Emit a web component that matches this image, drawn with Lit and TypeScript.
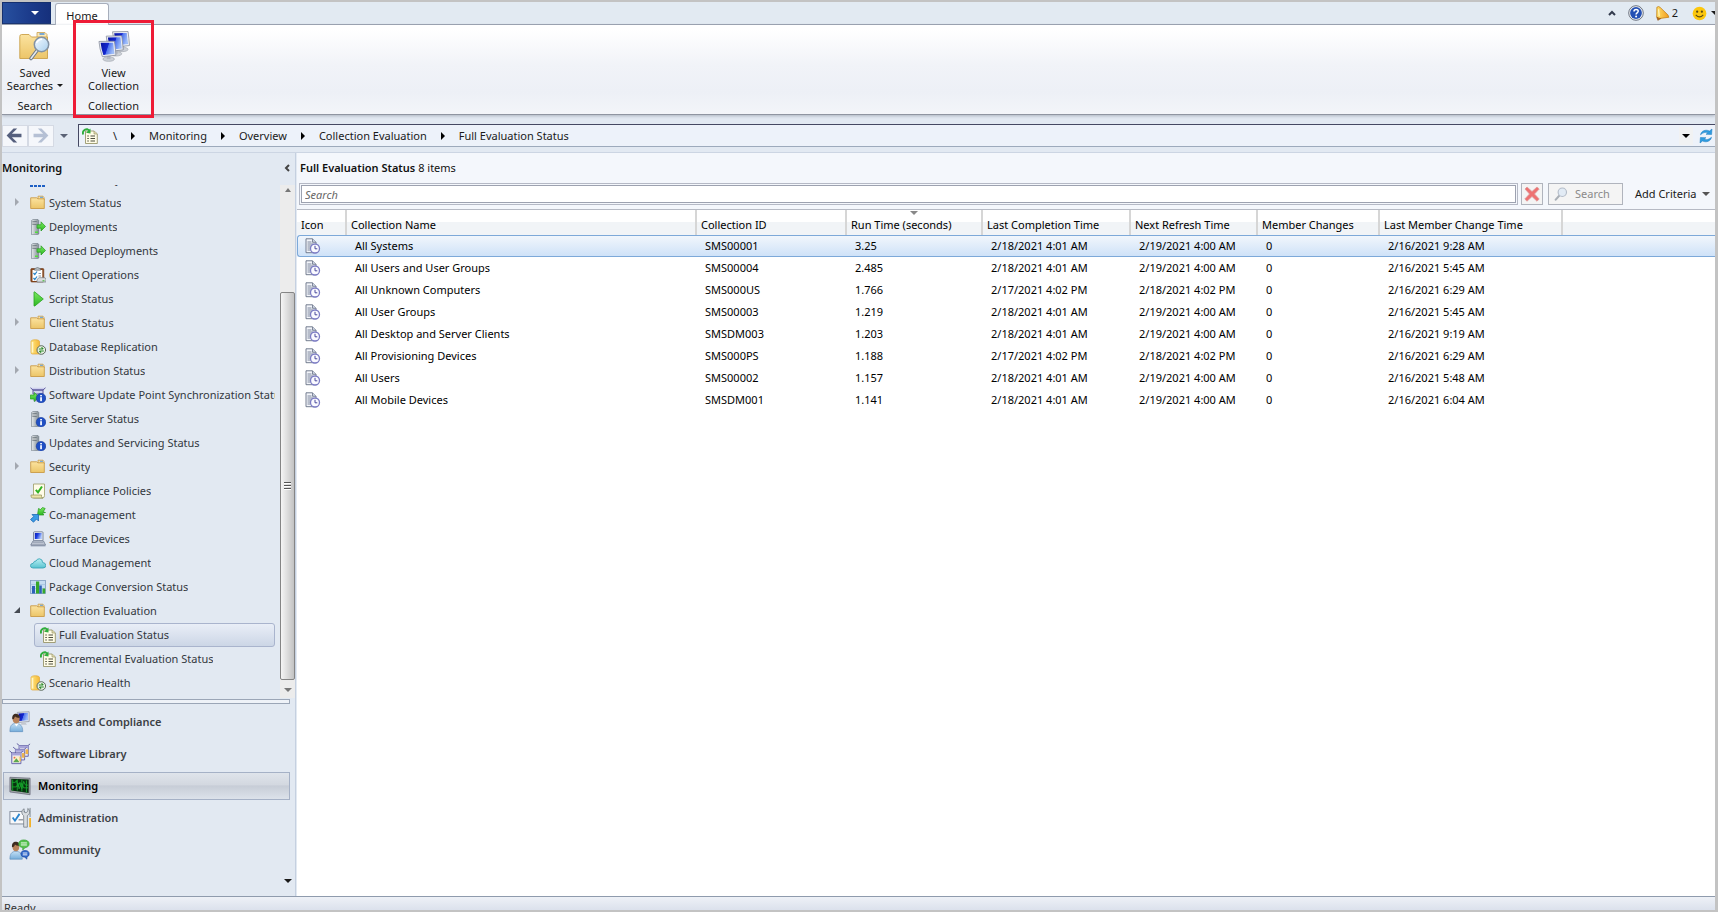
import { LitElement, html, css, svg, nothing } from "lit";
import { customElement, state } from "lit/decorators.js";
import { classMap } from "lit/directives/class-map.js";

type Shape = ReturnType<typeof svg>;

const icon = (size: number, shape: Shape, box = 16) => html`
  <svg class="icon" width=${size} height=${size} viewBox="0 0 ${box} ${box}" aria-hidden="true">${shape}</svg>`;

const info = svg`
  <circle cx="11" cy="11.2" r="4.8" fill="#1f4fc4" stroke="#173a9a" stroke-width=".6"/>
  <rect x="10.2" y="10.2" width="1.7" height="4" fill="#fff"/><rect x="10.2" y="8" width="1.7" height="1.4" fill="#fff"/>`;
const tower = svg`
  <path d="M1.5 1.5 3 .5h5l.8 1V15l-1.2.7H1.5z" fill="url(#steel)" stroke="#6f7b84" stroke-width=".6"/>
  <path d="M2.3 3h4.4M2.3 5h4.4" stroke="#3f4a52" stroke-width="1"/>
  <path d="M2.3 4h4.4" stroke="#fff" stroke-width=".8"/>`;
const database = svg`
  <path d="M1 2.5C1 .2 9.500.2 9.500 2.500V15H2.500Q1 15 1 13.500z" fill="url(#gold)" stroke="#e0a63a" stroke-width=".7"/>
  <path d="M2.500 3v10.500" stroke="#fff6c8" stroke-width="1.600"/>
  <circle cx="11.300" cy="11" r="4.300" fill="#e9f2e4" stroke="#5c6a5c" stroke-width="1"/>
  <path d="M8.800 10h4M11.500 8.300 13.300 10M13.800 12h-4M11.100 13.700 9.300 12" stroke="#2c8a2a" stroke-width="1.100" fill="none"/>`;

const shapes: Record<string, Shape> = {
  site: svg`<path d="M0 14.500h16" stroke="#1d5fc4" stroke-width="3" stroke-dasharray="3 1"/>`,
  folder: svg`
    <path d="M8 3V1.200h5L14 2.500V5H8z" fill="#f8e3a6" stroke="#c99b46" stroke-width=".8"/>
    <path d="M10 2.300h3" stroke="#5a9be0" stroke-width="1"/>
    <path d="M.7 2.800h6l1.200 1h6.400v9.700H.7z" fill="url(#manila)" stroke="#c99b46" stroke-width=".9"/>`,
  deploy: svg`${tower}<rect x="5" y="12.500" width="3" height="1.500" fill="#4fe03a"/>
    <path d="M7 5.800h4V2.800L15.500 7.500 11 12V9.200H7z" fill="url(#leaf)" stroke="#249a1c" stroke-width=".7"/>`,
  clipboard: svg`
    <rect x=".8" y="1.500" width="13" height="13.500" rx="1" fill="#8a4a20" stroke="#6b3413" stroke-width=".6"/>
    <rect x="2.500" y="3" width="9.800" height="11" fill="#fff"/>
    <path d="M4.500 1.800Q7.500-.8 10.500 1.800V3.200h-6z" fill="#b9bec3" stroke="#5e666c" stroke-width=".6"/>
    <path d="M3.500 6 4.800 7.500 7 4.500M3.500 11l1.300 1.500L7 9.500" stroke="#2583c8" stroke-width="1.200" fill="none"/>
    <path d="M8.500 6.500H11M8.500 9H11" stroke="#8b98a5"/>
    <path d="M7 12.500 9 10.700h6l1 1.800V15H7z" fill="#d9dcdf" stroke="#777f86" stroke-width=".7"/><path d="M12.500 13.800h2" stroke="#39b52c"/>`,
  play: svg`<path d="M4 1.200Q4 .6 4.800 1L13.300 8 4.800 15Q4 15.400 4 14.500z" fill="url(#leaf)" stroke="#27a31d" stroke-width=".8"/>`,
  database,
  sync: svg`
    <path d="M.5.800 3 3h10L15.500.800M3 3v4h10V3z" fill="#cdd0ee" stroke="#5a569c" stroke-width="1"/>
    <path d="M4 9h9v5H4z" fill="#dfe1f4" stroke="#6f6cab" stroke-width=".6"/>
    <path d="M.3 8h4V5.500L9 10 4.300 14.500V12H.3z" fill="url(#leaf)" stroke="#249a1c" stroke-width=".7"/>${info}`,
  server: svg`${tower}${info}`,
  policy: svg`
    <path d="M3.500 1H14.500V12.500Q14.500 15 12.500 15H3.500z" fill="#fffce8" stroke="#9b9a63" stroke-width=".8"/>
    <path d="M1 12h10.500v1.500Q11.500 15 13 15H2.800Q1 15 1 13z" fill="#ece4a9" stroke="#9b9a63" stroke-width=".8"/>
    <path d="M5.800 6.800 8 9.300 12 3.500" stroke="#2fb324" stroke-width="2" fill="none"/>`,
  comanage: svg`
    <path d="M15.500 5.500 13.200 4.800 15.200 1.500 12.500.500 10.500 2.500 8.500 1.500 7.500 8 13.800 8 12.500 5.800z" fill="url(#leaf)" stroke="#249a1c" stroke-width=".7"/>
    <path d="M2 7.500h6.500v6.500L6.500 12 3.500 15.200.500 12.500 3.800 9.500z" fill="#3a9be6" stroke="#1d69b4" stroke-width=".8"/>`,
  laptop: svg`
    <rect x="3.500" y=".8" width="9.500" height="9" rx=".8" fill="#e8ecf2" stroke="#68748a" stroke-width=".8"/>
    <rect x="4.800" y="2" width="7" height="6" fill="url(#screen)"/>
    <path d="M3 10h10.500l2 4H.8z" fill="#d8dee8" stroke="#68748a" stroke-width=".8"/><path d="M3 11.500h10.500M2.300 13h12" stroke="#8994a8" stroke-width=".7"/>
    <path d="M.8 14.300h14.700v1H.8z" fill="#7d89a0"/>`,
  cloud: svg`<path d="M3 13Q.4 12.800.4 10.600.500 8.500 3.200 8.300 4 5.800 6 6 7 3.600 9.600 3.800q3 .4 3 3.700 3.200.3 3.200 2.900T13 13z" fill="url(#aqua)" stroke="#3aa6b8" stroke-width=".9"/>`,
  chart: svg`
    <rect x=".5" y="1.500" width="15" height="13" fill="#c5dcf2" stroke="#7d9cc0" stroke-width=".8"/>
    <path d="M.5 5.500h15M.5 9.500h15" stroke="#9fbede" stroke-width=".7"/>
    <rect x="2" y="7" width="3" height="7.500" fill="#2d62b8"/><rect x="6" y="2.500" width="3.200" height="12" fill="#35a82b"/>
    <rect x="9.200" y="6.500" width="2.600" height="8" fill="#2d62b8"/><rect x="12.500" y="9.500" width="2.700" height="5" fill="#35a82b"/>`,
  evaluation: svg`
    <path d="M3.500 3H12L15.300 5.800V15.500H3.500z" fill="#fffce6" stroke="#8e8a5a" stroke-width=".8"/>
    <path d="M12 3v3h3" fill="#e7e0b4" stroke="#8e8a5a" stroke-width=".6"/>
    <path d="M8.500 8h4.500M8.500 10.500h4.500M8.500 13h4.500" stroke="#4d4d3e" stroke-width="1.100"/>
    <path d="M5.300 8h1.500M5.300 10.500h1.500M5.300 13h1.500" stroke="#4d4d3e" stroke-width="1.100"/>
    <path d="M1.200 6.500C0 3.500 2.500.8 5.500 1.300L7.500 2.500" stroke="#2fae3c" stroke-width="1.900" fill="none"/>
    <path d="M8.500.600V5.500L4 4.800z" fill="#2fae3c"/>`,
  assets: svg`
    <path d="M9 1.500 22 .8V11.500L10 12.500z" fill="#e3e6ec" stroke="#8a909c" stroke-width=".8"/>
    <path d="M10.300 2.600 20.800 2V10.200L11 11z" fill="url(#deep)"/>
    <path d="M14 12.500h4l1.500 2.500h-7z" fill="#c3c7cf"/>
    <path d="M1 22.500C1 16 3 13.500 7.500 13.500S15 16 15 22.500z" fill="url(#shirt)" stroke="#5b8cba" stroke-width=".7"/>
    <path d="M6 13.500 8 17l2.500-3.500z" fill="#fff"/>
    <ellipse cx="7.800" cy="8.500" rx="3.800" ry="5" fill="#b9825a"/>
    <path d="M3.600 9C3 4 6 2.700 8.500 3.200q3.500.8 3 4.300Q8 7.500 6.500 6 6 9 3.600 9z" fill="#3d2b20"/>`,
  library: svg`
    ${[[10, 0], [6, 4], [2, 8]].map(([x, y]) => svg`
      <g transform="translate(${x} ${y})">
        <path d="M-1.500.5 1.500 3h9L13 1" stroke="#5a569c" stroke-width="1" fill="none"/>
        <path d="M1 3h10v11.500H1z" fill="#e5e4f5" stroke="#6360a5" stroke-width="1"/>
        <path d="M1 3h10v2.500H1z" fill="#a7a4d8"/><path d="M8 7h3v5H8z" fill="#efb44c"/>
      </g>`)}
    <path d="M4.500 14.500h7V21h-7z" fill="#fdf0cc"/><path d="M4.500 21 8 16.500l3.500 4.500z" fill="#5ca84e"/><circle cx="6" cy="16" r="1" fill="#e86c4a"/>`,
  monitor: svg`
    <path d="M1 2.500 23 3.500V21.500L1 18.500z" fill="#9fa6a6" stroke="#667" stroke-width=".8"/>
    <path d="M2.500 4 21.500 5V19.500L2.500 17z" fill="#07300f"/>
    <path d="M3 8h4l1-2 2 7 2-5 2 7 2-8 2 4h3M3 13h5l2-4 1 6 3-6 2 5h5M4 5v12M9 5v12M14 5v13M19 6v13" stroke="#16a52c" stroke-width="1" fill="none"/>`,
  admin: svg`
    <rect x="1" y="5" width="16" height="13.500" fill="#f8f9fb" stroke="#7c8796"/>
    <path d="M4 11.500 6.500 15 11.500 7.500" stroke="#2b86cf" stroke-width="2" fill="none"/><path d="M10.500 14h5" stroke="#5d6673"/>
    <path d="M16 9.500C13 7.500 13.500 3 16.500 2v3.500l2 .8 2-1.500V1.500C23.500 3.500 23 8 20 9.500V22h-4z" fill="#d9dde1" stroke="#6c757d" stroke-width=".8"/>
    <path d="M23 1v10" stroke="#7c858d"/><path d="M22 12h2.500v10H22z" fill="#f2b22c"/>`,
  community: svg`
    <path d="M1 22C1 16 3 13.500 7.500 13.500S14.500 16 14.500 22z" fill="url(#shirt)" stroke="#5b8cba" stroke-width=".7"/>
    <ellipse cx="7.500" cy="8.500" rx="3.700" ry="4.900" fill="#b9825a"/>
    <path d="M3.300 9C2.700 4 5.700 2.500 8.200 3q3.500.8 3 4.300-3 .2-4.800-1.300Q6 9 3.300 9z" fill="#3d2b20"/>
    <path d="M16 1c3.500 0 6 1.600 6 4.300S19.500 9.500 17.500 9.500L15 12V9.300C12 9 10.500 7.500 10.500 5.300 10.500 2.600 13 1 16 1z" fill="#56c24e" stroke="#2f9a2c" stroke-width=".7"/>
    <path d="M13 4.300h6.500M13 6.500h6.500" stroke="#fff"/>
    <path d="M17.500 12.500c3 0 4.500 1.400 4.500 3.600s-1 3-2.500 3.400V22l-2.300-2.200c-2.700 0-4.200-1.500-4.200-3.700s1.500-3.600 4.500-3.600z" fill="#2d66c9" stroke="#1c469c" stroke-width=".7"/>
    <path d="M15 15.300h5M15 17.300h5" stroke="#fff"/>`,
  savedSearch: svg`
    <path d="M18 4.500V1.500h8l2 2V9H18z" fill="#fbe8b4" stroke="#c9a04e" stroke-width=".8"/><path d="M20.500 3h5" stroke="#4f93df" stroke-width="1.500"/>
    <path d="M.8 5.500Q.8 3.500 2.500 3.500H10L12.500 6H28.500V27.500H.8z" fill="url(#manila)" stroke="#cba04a" stroke-width=".9"/>
    <path d="M18 19.500 12 27.500" stroke="#6d7986" stroke-width="3.600" stroke-linecap="round"/><path d="M18 19.500 12 27.500" stroke="#e6eaee" stroke-width="1.500" stroke-linecap="round"/>
    <circle cx="22.500" cy="13.500" r="7.200" fill="url(#lens)" stroke="#8392a3" stroke-width="1.500"/>
    <path d="M17.500 12Q19 8.500 23 8.300" stroke="#fff" stroke-width="1.500" fill="none"/>`,
  monitors: svg`
    ${[[14, 0], [7.5, 4.5], [0, 10]].map(([x, y]) => svg`
      <g transform="translate(${x} ${y})">
        <ellipse cx="11" cy="19" rx="6" ry="2.300" fill="#cdd1d8" stroke="#989da6" stroke-width=".6"/><path d="M9 15h4v4H9z" fill="#b4b9c2"/>
        <path d="M1 .8 17 .5Q18 8 18.500 15L4.500 16.500Q1.500 8 1 .8z" fill="#eceef3" stroke="#858c9b" stroke-width=".8"/>
        <path d="M2.700 2.200 15.700 2Q16.300 8 17 13.500L5.500 14.800Q3.300 8 2.700 2.200z" fill="url(#deep)"/>
      </g>`)}`,
  log: svg`
    <path d="M1 .8H7.500L11 4.300V14.700H1z" fill="#f3f5fa" stroke="#667085" stroke-width=".9"/><path d="M7.500.8V4.300H11" fill="#cbd2e0" stroke="#667085" stroke-width=".8"/>
    <path d="M2.500 4h4M2.500 6h6M2.500 8h4M2.500 10h3M2.500 12h3" stroke="#6d7890" stroke-width=".9"/>
    <circle cx="10" cy="10.500" r="4.500" fill="#fafaff" stroke="#7c7cc4" stroke-width="1.300"/><path d="M10 7.800v3h2.300" stroke="#4a4a9c" stroke-width="1" fill="none"/>`,
  back: svg`<path d="M8 1.500 1.500 8 8 14.500H11.500L6.500 9.700H15.500V6.300H6.500L11.500 1.500z" fill="#555f7d"/>`,
  forward: svg`<path d="M8 1.500 14.500 8 8 14.500H4.500L9.500 9.700H.5V6.300H9.500L4.500 1.500z" fill="#b5c0d4"/>`,
  refresh: svg`
    <path d="M2.500 6.800C3 3 7.500 1 11.500 3L14 1 13.600 6.500 8 6.300 9.800 4.800C7.500 3.800 5 4.500 2.500 6.800z" fill="#2c9be0" stroke="#1d78bd" stroke-width=".5"/>
    <path d="M13.500 9.200C13 13 8.500 15 4.500 13L2 15 2.400 9.500 8 9.700 6.200 11.200C8.500 12.200 11 11.500 13.500 9.200z" fill="#2c9be0" stroke="#1d78bd" stroke-width=".5"/>`,
  help: svg`
    <circle cx="8" cy="8" r="7.300" fill="#f1f3f6" stroke="#6d7480" stroke-width="1"/><circle cx="8" cy="8" r="5.900" fill="#2450b4"/>
    <path d="M6 6.500C6 3.800 10.300 3.900 10.200 6.300 10.100 7.800 8.100 7.800 8.100 9.400" stroke="#fff" stroke-width="1.500" fill="none"/><circle cx="8.100" cy="11.600" r="1" fill="#fff"/>`,
  bell: svg`
    <path d="M2 1.300Q4-.2 5.500 1.500L13.800 9.500 14.800 12 3.500 13.500 1.800 11.500z" fill="url(#amber)" stroke="#c07c12" stroke-width=".8"/>
    <path d="M1.800 11.500 3 15.300 6.500 13.200" fill="#b56a14" stroke="#8e4e10" stroke-width=".6"/><path d="M3.800 3.500 4.500 11" stroke="#fff4b8" stroke-width="1.400"/>`,
  smile: svg`
    <circle cx="8" cy="8" r="7.300" fill="#fcc70d"/><circle cx="5.500" cy="6" r="1.200" fill="#5b4a12"/><circle cx="10.500" cy="6" r="1.200" fill="#5b4a12"/>
    <path d="M4 9.500Q8 13.800 12 9.500" stroke="#5b4a12" stroke-width="1.200" fill="none"/>`,
  cross: svg`<path d="M1 3 3 1 8 5.500 13 1 15.200 3 10.500 8 15.200 13 13 15.200 8 10.500 3 15.200.800 13 5.500 8z" fill="#ee7272" stroke="#dd9a9a" stroke-width=".8"/>`,
  glass: svg`
    <path d="M6.300 9.500 2 14.500" stroke="#a9afb6" stroke-width="2.400" stroke-linecap="round"/>
    <circle cx="9.500" cy="6" r="4.800" fill="#e2ebf5" stroke="#b4bcc8" stroke-width="1.300"/>`,
};

const defs = html`
  <svg class="defs" aria-hidden="true"><defs>
    <linearGradient id="steel"><stop offset="0" stop-color="#e6eaec"/><stop offset="1" stop-color="#7f8a92"/></linearGradient>
    <linearGradient id="gold"><stop offset="0" stop-color="#ffe680"/><stop offset="1" stop-color="#f4b838"/></linearGradient>
    <linearGradient id="manila" x2="0" y2="1"><stop offset="0" stop-color="#fbe3a0"/><stop offset="1" stop-color="#ecc568"/></linearGradient>
    <linearGradient id="leaf" x2="0" y2="1"><stop offset="0" stop-color="#7be862"/><stop offset="1" stop-color="#2cb822"/></linearGradient>
    <linearGradient id="screen" x2="1" y2=".4"><stop offset="0" stop-color="#0a1cb4"/><stop offset=".45" stop-color="#1c3de0"/><stop offset="1" stop-color="#a9c4fb"/></linearGradient>
    <linearGradient id="deep" x2="1" y2=".3"><stop offset="0" stop-color="#0812a0"/><stop offset=".55" stop-color="#1428d0"/><stop offset=".6" stop-color="#4f74ee"/><stop offset="1" stop-color="#9dbcf8"/></linearGradient>
    <linearGradient id="aqua" x2="0" y2="1"><stop offset="0" stop-color="#b8eef2"/><stop offset="1" stop-color="#58c3d0"/></linearGradient>
    <linearGradient id="shirt" x2="0" y2="1"><stop offset="0" stop-color="#c3dff5"/><stop offset="1" stop-color="#76aedb"/></linearGradient>
    <linearGradient id="lens" x2="1" y2="1"><stop offset="0" stop-color="#f4faff"/><stop offset="1" stop-color="#a9cfee"/></linearGradient>
    <linearGradient id="amber"><stop offset="0" stop-color="#ffe06a"/><stop offset="1" stop-color="#f29a1c"/></linearGradient>
  </defs></svg>`;

interface Node { label: string; icon: string; twisty?: "open" | "closed"; children?: Node[] }

const tree: Node[] = [
  { label: "Site Hierarchy", icon: "site" },
  { label: "System Status", icon: "folder", twisty: "closed" },
  { label: "Deployments", icon: "deploy" },
  { label: "Phased Deployments", icon: "deploy" },
  { label: "Client Operations", icon: "clipboard" },
  { label: "Script Status", icon: "play" },
  { label: "Client Status", icon: "folder", twisty: "closed" },
  { label: "Database Replication", icon: "database" },
  { label: "Distribution Status", icon: "folder", twisty: "closed" },
  { label: "Software Update Point Synchronization Status", icon: "sync" },
  { label: "Site Server Status", icon: "server" },
  { label: "Updates and Servicing Status", icon: "server" },
  { label: "Security", icon: "folder", twisty: "closed" },
  { label: "Compliance Policies", icon: "policy" },
  { label: "Co-management", icon: "comanage" },
  { label: "Surface Devices", icon: "laptop" },
  { label: "Cloud Management", icon: "cloud" },
  { label: "Package Conversion Status", icon: "chart" },
  {
    label: "Collection Evaluation", icon: "folder", twisty: "open", children: [
      { label: "Full Evaluation Status", icon: "evaluation" },
      { label: "Incremental Evaluation Status", icon: "evaluation" },
    ],
  },
  { label: "Scenario Health", icon: "database" },
];

const workspaces = [
  ["Assets and Compliance", "assets"],
  ["Software Library", "library"],
  ["Monitoring", "monitor"],
  ["Administration", "admin"],
  ["Community", "community"],
];

const columns = ["Icon", "Collection Name", "Collection ID", "Run Time (seconds)", "Last Completion Time",
  "Next Refresh Time", "Member Changes", "Last Member Change Time"];

const rows = [
  ["All Systems", "SMS00001", "3.25", "2/18/2021 4:01 AM", "2/19/2021 4:00 AM", "0", "2/16/2021 9:28 AM"],
  ["All Users and User Groups", "SMS00004", "2.485", "2/18/2021 4:01 AM", "2/19/2021 4:00 AM", "0", "2/16/2021 5:45 AM"],
  ["All Unknown Computers", "SMS000US", "1.766", "2/17/2021 4:02 PM", "2/18/2021 4:02 PM", "0", "2/16/2021 6:29 AM"],
  ["All User Groups", "SMS00003", "1.219", "2/18/2021 4:01 AM", "2/19/2021 4:00 AM", "0", "2/16/2021 5:45 AM"],
  ["All Desktop and Server Clients", "SMSDM003", "1.203", "2/18/2021 4:01 AM", "2/19/2021 4:00 AM", "0", "2/16/2021 9:19 AM"],
  ["All Provisioning Devices", "SMS000PS", "1.188", "2/17/2021 4:02 PM", "2/18/2021 4:02 PM", "0", "2/16/2021 6:29 AM"],
  ["All Users", "SMS00002", "1.157", "2/18/2021 4:01 AM", "2/19/2021 4:00 AM", "0", "2/16/2021 5:48 AM"],
  ["All Mobile Devices", "SMSDM001", "1.141", "2/18/2021 4:01 AM", "2/19/2021 4:00 AM", "0", "2/16/2021 6:04 AM"],
];

@customElement("app-root")
export class AppRoot extends LitElement {
  @state() private selectedNode = "Full Evaluation Status";
  @state() private workspace = "Monitoring";
  @state() private selectedRow = 0;

  static styles = css`
    :host { display: block; height: 100vh; font: 11px/16px "Noto Sans", "Open Sans", sans-serif; color: #1a1a1a; }
    * { box-sizing: border-box; }
    button, input { font: inherit; color: inherit; margin: 0; }
    button { display: flex; align-items: center; padding: 0; border: 0; background: none; text-align: left; white-space: nowrap; }
    ul, ol { list-style: none; margin: 0; padding: 0; }
    h1, h2 { margin: 0; font-size: 11px; line-height: 16px; }
    .icon { display: block; flex: none; }
    .defs { position: absolute; width: 0; height: 0; }
    .down { flex: none; width: 0; height: 0; border: 4px solid transparent; border-top-color: currentColor; border-bottom: 0; }
    .right { flex: none; width: 0; height: 0; border: 4px solid transparent; border-left-color: #000; border-right: 0; }

    .window { display: flex; flex-direction: column; height: 100%; overflow: hidden;
      border: 2px solid #c3c3c3; border-right-width: 3px; background: #e2e9f2; }

    .titlebar { flex: none; display: flex; align-items: flex-end; height: 23px; border-bottom: 1px solid #969dab; background: #e2eaf2; }
    .appmenu { justify-content: center; width: 49px; height: 22px; padding-left: 16px; color: #fff;
      background: linear-gradient(90deg, #27509f, #1b3a8a 60%, #16307c); border: 1px solid #15306f; }
    .tab { justify-content: center; width: 54px; height: 22px; margin: 0 0 -1px 4px; padding-top: 2px; background: #fff;
      border: 1px solid #a7aebb; border-bottom: 0; border-radius: 3px 3px 0 0; }
    .tools { display: flex; align-items: center; align-self: center; margin-left: auto; }
    .tools button { height: 18px; }
    .tool-help { margin: 0 11px 0 12px; }
    .tool-bell { gap: 2px; margin-right: 14px; }
    .tool-smile { gap: 4px; margin-right: -4px; }

    .ribbon { flex: none; display: flex; height: 90px; border-bottom: 1px solid #8f95a1;
      background: linear-gradient(#fff 5%, #f1f3f8 45%, #edf0f6 75%, #f3f5f9); box-shadow: 0 1px 3px #aeb5c1; }
    .group { position: relative; display: flex; flex-direction: column; align-items: center; width: 66px; padding-top: 6px; }
    .group + .group { width: 81px; margin-left: 5px; }
    .command { flex-direction: column; line-height: 13px; text-align: center; }
    .group-name { margin-top: auto; }
    .label { display: block; margin-top: 3px; }
    .label .down { display: inline-block; margin: 0 0 3px 4px; border-width: 3px; border-bottom: 0; }
    .callout { position: absolute; inset: -5px 0 -4px; border: 3px solid #ee1b36; pointer-events: none; }

    .address { flex: none; display: flex; height: 38px; padding: 9px 0 5px; border-bottom: 1px solid #ccd5e3; }
    .history { display: flex; align-items: center; }
    .history .step { justify-content: center; width: 26px; height: 22px; background: #f5f7fb; border: 1px solid #d5dae4; }
    .history .step:first-child { padding-right: 4px; }
    .history .down { margin: 0 10px 0 6px; color: #5a6275; }
    .path { flex: 1; display: flex; align-items: center; min-width: 0; padding: 0 1px 0 3px; background: #edf2fa;
      border: 1px solid #9daabc; border-top-color: #454862; border-left-color: #454862; border-right: 0; }
    .crumbs { display: flex; align-items: center; gap: 14px; margin: 0 auto 0 15px; }
    .crumbs li { display: flex; align-items: center; gap: 14px; }
    .crumbs a { color: inherit; text-decoration: none; }
    .path-end { justify-content: center; width: 14px; height: 18px; margin-right: 5px; background: #f1f2f3; color: #000; }

    .body { flex: 1; display: flex; min-height: 0; }
    .sidebar { flex: none; display: flex; flex-direction: column; width: 294px; border-right: 1px solid #c5d0e0; }
    .side-head { display: flex; align-items: flex-start; justify-content: space-between; height: 32px; padding: 7px 5px 0 0; }
    .side-head h2 { font-weight: 600; color: #111; }
    .side-head button { height: 16px; }
    .scroller { flex: 1; display: flex; min-height: 0; }
    .tree { flex: 1; display: flex; flex-direction: column; min-width: 0; overflow: hidden; padding-right: 5px; }
    .tree > li { flex: none; }
    .tree > li:first-child { display: flex; flex-direction: column; justify-content: flex-end; height: 6px; overflow: hidden; }
    .node { flex: none; width: 100%; height: 24px; padding-left: 8px; color: #333840; }
    .node > span { overflow: hidden; padding-left: 3px; }
    .twisty { flex: none; display: flex; justify-content: center; width: 20px; margin-bottom: 2px; }
    .node .closed { border-left-color: #a3a8b0; margin-right: 6px; }
    .node .open { width: 0; height: 0; margin-right: 6px; border: 3px solid #454a52; border-left-color: transparent; border-top-color: transparent; }
    .sub .node { width: auto; margin-left: 32px; padding-left: 5px; border: 1px solid transparent; border-radius: 3px; }
    .sub li { display: grid; }
    .node.selected { border-color: #a9b4cd; background: linear-gradient(#e9eef7, #ccd6e6); }
    .scrollbar { flex: none; display: flex; flex-direction: column; align-items: center; width: 15px; padding: 3px 0 6px; background: #ececec; color: #777; }
    .thumb { width: 15px; height: 77%; margin-top: auto; margin-bottom: 8px; display: grid; place-content: center; gap: 1px; border: 1px solid #858585; border-radius: 2px;
      background: linear-gradient(90deg, #f5f5f5, #dcdcdc 50%, #c2c2c2); }
    .thumb i { width: 7px; height: 2px; background: #555; border-bottom: 1px solid #fff; }
    .up { width: 0; height: 0; border: 3px solid transparent; border-bottom: 4px solid #777; border-top: 0; }
    .splitter { flex: none; height: 5px; margin: 1px 5px 0 0; border: 1px solid #9ba6b7; background: #eef2f8; }
    .workspaces { display: grid; gap: 4px; margin: 4px 5px 0 1px; }
    .workspace { width: 100%; height: 28px; padding-left: 5px; gap: 7px; font-weight: 600; color: #3c4045; border: 1px solid transparent; }
    .workspace.selected { color: #000; border-color: #a5b1c6; background: linear-gradient(#dfe4eb, #d3d8e0 45%, #c7cdd7 50%, #dce2ea); }
    .overflow { align-self: flex-end; margin: 11px 3px 0 0; height: 12px; }
    .side-end { height: 9px; }

    .main { flex: 1; display: flex; flex-direction: column; min-width: 0; margin-left: 1px; background: #fff; }
    .head { padding: 7px 2px 4px 2px; background: #f4f7fc; border-bottom: 1px solid #b6bac4; }
    .head h1 { padding-left: 1px; font-weight: 400; color: #111; }
    .head b { font-weight: 600; }
    .filter { display: flex; align-items: center; margin-top: 7px; }
    .query { flex: 1; display: flex; height: 22px; padding: 1px; border: 1px solid #b5b9c5; background: #f4f7fc; }
    .query input { flex: 1; min-width: 0; border: 1px solid #9da2b0; padding: 1px 3px 0; background: #fff; outline: 0; }
    .query input::placeholder { color: #666; font-style: italic; opacity: 1; }
    .clear { justify-content: center; width: 22px; height: 22px; margin: 0 5px 0 3px; border: 1px solid #b0b4bd; background: #f4f4f4; }
    .go { width: 75px; height: 22px; padding-left: 5px; gap: 7px; color: #8a8a8a; border: 1px solid #b0b4bd; background: #f4f4f4; }
    .criteria { width: 90px; gap: 6px; padding-left: 12px; }
    .criteria .down { color: #555; }

    table { width: 100%; table-layout: fixed; border-collapse: separate; border-spacing: 0; color: #000; }
    .w-icon { width: 50px; } .w-name { width: 350px; } .w-id { width: 150px; } .w-run { width: 136px; }
    .w-done { width: 148px; } .w-next { width: 127px; } .w-count { width: 122px; } .w-change { width: 183px; }
    th { position: relative; height: 25px; padding: 5px 0 0 4px; font-weight: 400; text-align: left; white-space: nowrap;
      border-right: 2px solid #d6d6d6; background: linear-gradient(#fff 50%, #f1f4f7 50%); }
    th:last-child { border-right: 0; }
    .sort { position: absolute; top: 1px; left: calc(50% - 4px); color: #888; }
    td { height: 22px; padding: 0 0 0 8px; white-space: nowrap; border: solid transparent; border-width: 1px 0; }
    tr.selected td { border-color: #7da9d9; background: linear-gradient(#f1f6fc, #cfe2f8); }
    td:first-child { border-left-width: 1px; padding-left: 7px; }
    tr.selected td:first-child { border-radius: 3px 0 0 3px; }

    .status { flex: none; height: 14px; padding: 3px 0 0 2px; overflow: hidden; border-top: 1px solid #8f9bad;
      background: linear-gradient(#eef1f7, #dbe1ec); color: #333; }
  `;

  private renderNode(node: Node): unknown {
    const selected = node.label === this.selectedNode;
    const nested = !tree.includes(node);
    return html`
      <li>
        <button class=${classMap({ node: true, selected })} @click=${() => (this.selectedNode = node.label)}>
          ${nested ? nothing : html`<i class="twisty">${node.twisty
            ? html`<i class=${node.twisty === "open" ? "open" : "right closed"}></i>` : nothing}</i>`}
          ${icon(16, shapes[node.icon])}
          <span>${node.label}</span>
        </button>
        ${node.children ? html`<ul class="sub">${node.children.map((child) => this.renderNode(child))}</ul>` : nothing}
      </li>`;
  }

  private renderSidebar() {
    return html`
      <nav class="sidebar" aria-label="Workspaces">
        <div class="side-head">
          <h2>Monitoring</h2>
          <button aria-label="Collapse">
            <svg class="icon" width="6" height="8" viewBox="0 0 6 8"><path d="M5 1 2 4 5 7" fill="none" stroke="#444" stroke-width="2"/></svg>
          </button>
        </div>
        <div class="scroller">
          <ul class="tree">${tree.map((node) => this.renderNode(node))}</ul>
          <div class="scrollbar"><i class="up"></i><div class="thumb"><i></i><i></i><i></i></div><i class="down"></i></div>
        </div>
        <div class="splitter"></div>
        <div class="workspaces">
          ${workspaces.map(([label, name]) => html`
            <button class=${classMap({ workspace: true, selected: label === this.workspace })} @click=${() => (this.workspace = label)}>
              ${icon(22, shapes[name], 24)}<span>${label}</span>
            </button>`)}
        </div>
        <button class="overflow" aria-label="Configure buttons"><i class="down"></i></button>
        <div class="side-end"></div>
      </nav>`;
  }

  private renderMain() {
    return html`
      <main class="main">
        <div class="head">
          <h1><b>Full Evaluation Status</b> 8 items</h1>
          <div class="filter">
            <div class="query"><input type="text" aria-label="Search" placeholder="Search" /></div>
            <button class="clear" aria-label="Clear">${icon(16, shapes.cross)}</button>
            <button class="go">${icon(14, shapes.glass)}Search</button>
            <button class="criteria">Add Criteria<i class="down"></i></button>
          </div>
        </div>
        <table>
          <colgroup>
            <col class="w-icon" /><col class="w-name" /><col class="w-id" /><col class="w-run" /><col class="w-done" />
            <col class="w-next" /><col class="w-count" /><col class="w-change" /><col />
          </colgroup>
          <thead>
            <tr>${columns.map((name) => html`<th scope="col">${name}${name.startsWith("Run") ? html`<i class="down sort"></i>` : nothing}</th>`)}<th></th></tr>
          </thead>
          <tbody>
            ${rows.map((cells, index) => html`
              <tr class=${classMap({ selected: index === this.selectedRow })} @click=${() => (this.selectedRow = index)}>
                <td>${icon(16, shapes.log)}</td>${cells.map((cell) => html`<td>${cell}</td>`)}<td></td>
              </tr>`)}
          </tbody>
        </table>
      </main>`;
  }

  render() {
    return html`
      ${defs}
      <div class="window">
        <header class="titlebar">
          <button class="appmenu" aria-label="Application menu"><i class="down"></i></button>
          <button class="tab">Home</button>
          <div class="tools">
            <button aria-label="Minimize the ribbon">
              <svg class="icon" width="8" height="6" viewBox="0 0 8 6"><path d="M1 5 4 2 7 5" fill="none" stroke="#333b4d" stroke-width="2"/></svg>
            </button>
            <button class="tool-help" aria-label="Help">${icon(16, shapes.help)}</button>
            <button class="tool-bell">${icon(15, shapes.bell)}2</button>
            <button class="tool-smile" aria-label="Feedback">${icon(15, shapes.smile)}<i class="down"></i></button>
          </div>
        </header>
        <section class="ribbon">
          <div class="group">
            <button class="command">${icon(32, shapes.savedSearch, 32)}<span class="label">Saved<br />Searches<i class="down"></i></span></button>
            <div class="group-name">Search</div>
          </div>
          <div class="group">
            <button class="command">${icon(32, shapes.monitors, 33)}<span class="label">View<br />Collection</span></button>
            <div class="group-name">Collection</div>
            <div class="callout"></div>
          </div>
        </section>
        <div class="address">
          <div class="history">
            <button class="step" aria-label="Back">${icon(17, shapes.back)}</button>
            <button class="step" aria-label="Forward">${icon(17, shapes.forward)}</button>
            <button aria-label="Recent locations"><i class="down"></i></button>
          </div>
          <div class="path">
            ${icon(16, shapes.evaluation)}
            <ol class="crumbs">
              <li><a href="#">\\</a></li>
              ${["Monitoring", "Overview", "Collection Evaluation", "Full Evaluation Status"].map((name) => html`
                <li><i class="right"></i><a href="#">${name}</a></li>`)}
            </ol>
            <button class="path-end" aria-label="Show locations"><i class="down"></i></button>
            <button aria-label="Refresh">${icon(16, shapes.refresh)}</button>
          </div>
        </div>
        <div class="body">${this.renderSidebar()}${this.renderMain()}</div>
        <footer class="status">Ready</footer>
      </div>`;
  }
}
